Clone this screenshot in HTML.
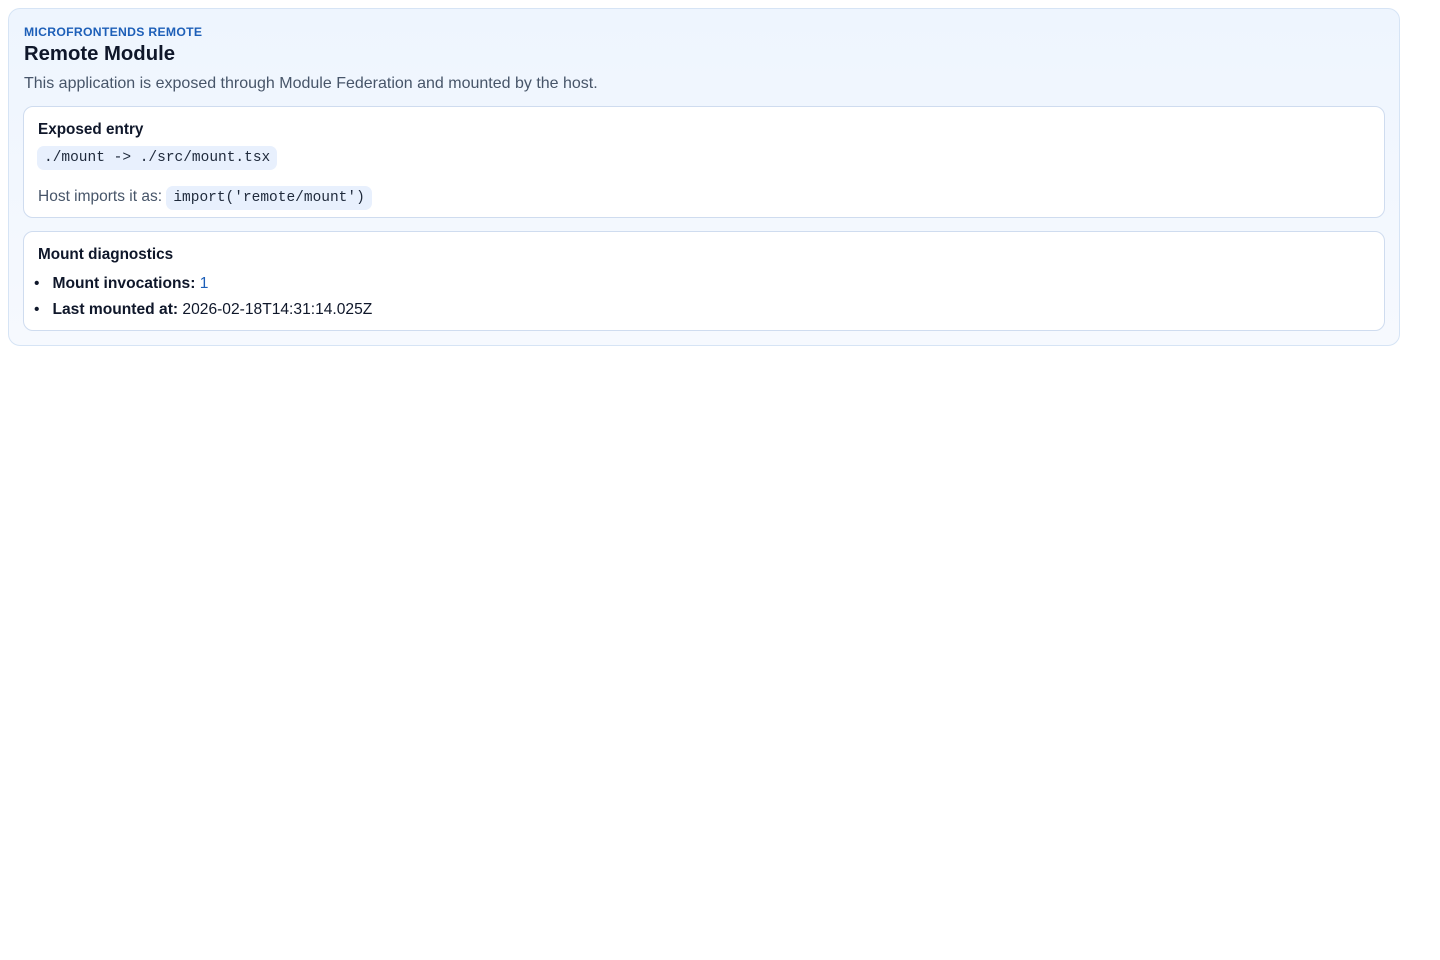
<!DOCTYPE html>
<html><head><meta charset="utf-8"><style>
*{box-sizing:border-box;margin:0;padding:0}
body{width:1440px;height:960px;background:#fff;font-family:"Liberation Sans",sans-serif;color:#0f172a;position:relative}
.outer{position:absolute;left:8px;top:8px;width:1392px;height:338px;border:1px solid #d6e4f5;border-radius:12px;background:linear-gradient(180deg,#eef5fe,#f6f9fe)}
.card{position:absolute;left:14px;width:1362px;background:#fff;border:1px solid #cfdcef;border-radius:10px}
.a{position:absolute;white-space:nowrap}
code{font-family:"Liberation Mono",monospace;font-size:14.5px;background:#e8f0fd;border-radius:7px;padding:4px 7px;color:#1e293b}
</style></head><body>
<div class="outer">
<div class="a" style="left:15px;top:16px;font-size:12.2px;font-weight:bold;color:#1d5fb8;letter-spacing:0.3px">MICROFRONTENDS REMOTE</div>
<div class="a" style="left:15px;top:34px;font-size:20.3px;font-weight:bold;color:#0f172a">Remote Module</div>
<div class="a" style="left:15px;top:66px;font-size:16px;color:#475569">This application is exposed through Module Federation and mounted by the host.</div>
<div class="card" style="top:97px;height:112px">
<div class="a" style="left:14px;top:14px;font-size:15.3px;font-weight:bold">Exposed entry</div>
<div class="a" style="left:13px;top:41px"><code>./mount -&gt; ./src/mount.tsx</code></div>
<div class="a" style="left:14px;top:81px;font-size:15.5px;color:#475569">Host imports it as: <code>import('remote/mount')</code></div>
</div>
<div class="card" style="top:222px;height:100px">
<div class="a" style="left:14px;top:14px;font-size:15.3px;font-weight:bold">Mount diagnostics</div>
<div class="a" style="left:10px;top:43px;font-size:15.6px">•&nbsp;&nbsp;&nbsp;<b>Mount invocations:</b> <span style="color:#1d5fb8">1</span></div>
<div class="a" style="left:10px;top:69px;font-size:15.6px">•&nbsp;&nbsp;&nbsp;<b>Last mounted at:</b> 2026-02-18T14:31:14.025Z</div>
</div>
</div>
</body></html>
